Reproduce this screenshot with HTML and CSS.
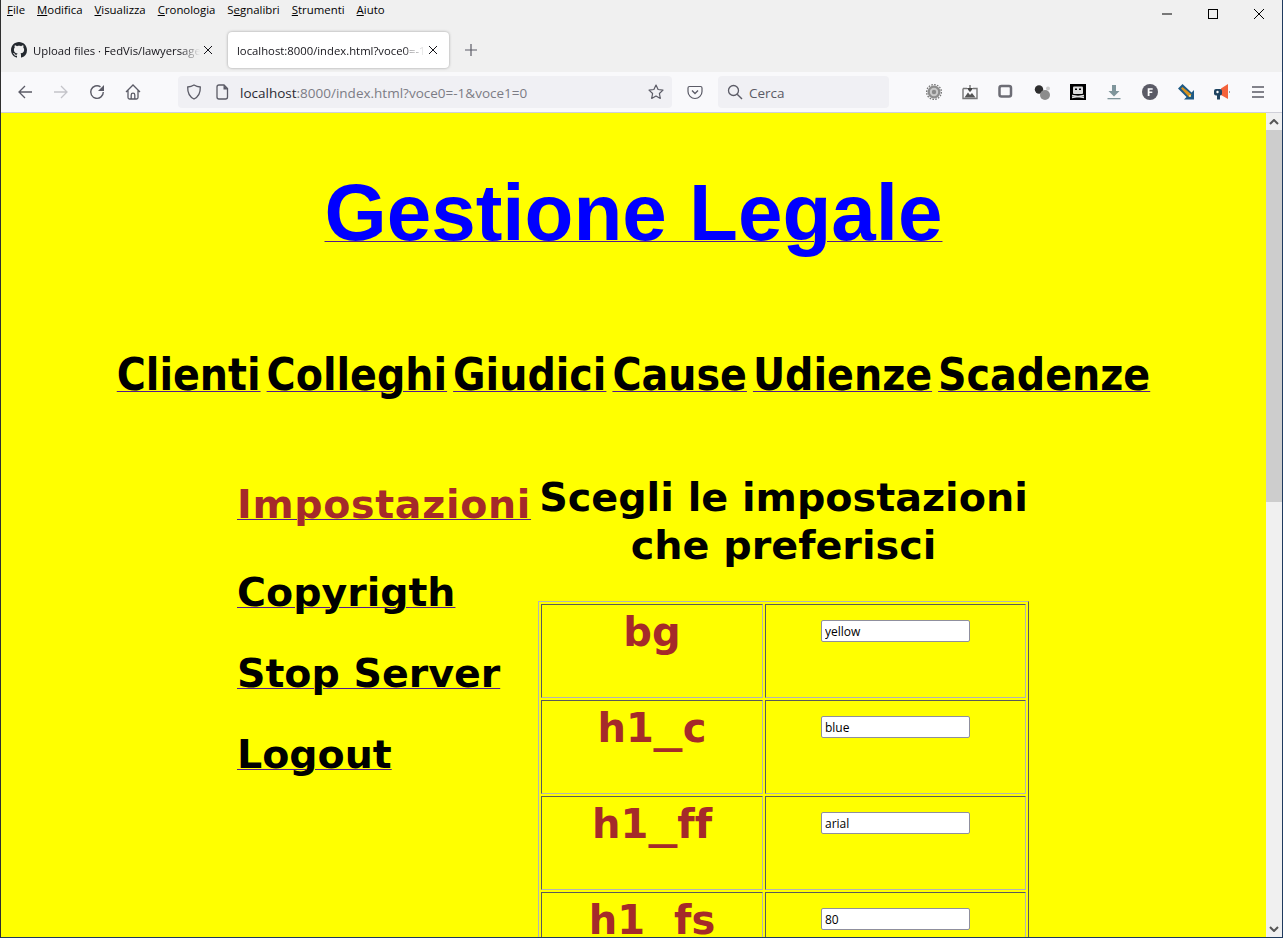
FILE: index.html
```html
<!DOCTYPE html>
<html lang="it">
<head>
    <meta charset="UTF-8">
    <title>Gestione Legale</title>
    <link rel="stylesheet" href="styles.css">
</head>
<body>
    <div class="window">
        <div class="topbar">
            <div class="menus">
                <span><u>F</u>ile</span>
                <span><u>M</u>odifica</span>
                <span><u>V</u>isualizza</span>
                <span><u>C</u>ronologia</span>
                <span>S<u>e</u>gnalibri</span>
                <span><u>S</u>trumenti</span>
                <span><u>A</u>iuto</span>
            </div>
            <div class="winctl">
                <svg width="46" height="28" viewBox="0 0 46 28"><path d="M18 14h10" stroke="#000" fill="none"/></svg>
                <svg width="46" height="28" viewBox="0 0 46 28"><rect x="18.500" y="9.500" width="9" height="9" stroke="#000" fill="none"/></svg>
                <svg width="46" height="28" viewBox="0 0 46 28"><path d="M18 9l10 10M28 9L18 19" stroke="#000" fill="none"/></svg>
            </div>
        </div>
        <div class="tabs">
            <div class="tab">
                <svg class="favicon" width="16" height="16" viewBox="0 0 16 16"><path fill="#24292f" d="M8 0C3.58 0 0 3.58 0 8c0 3.54 2.29 6.53 5.47 7.59.4.07.55-.17.55-.38 0-.19-.01-.82-.01-1.49-2.01.37-2.53-.49-2.69-.94-.09-.23-.48-.94-.82-1.13-.28-.15-.68-.52-.01-.53.63-.01 1.08.58 1.23.82.72 1.21 1.87.87 2.33.66.07-.52.28-.87.51-1.07-1.78-.2-3.64-.89-3.64-3.95 0-.87.31-1.59.82-2.15-.08-.2-.36-1.02.08-2.12 0 0 .67-.21 2.2.82.64-.18 1.32-.27 2-.27s1.36.09 2 .27c1.53-1.04 2.2-.82 2.2-.82.44 1.1.16 1.92.08 2.12.51.56.82 1.27.82 2.15 0 3.07-1.87 3.75-3.65 3.95.29.25.54.73.54 1.48 0 1.07-.01 1.93-.01 2.2 0 .21.15.46.55.38A8.01 8.01 0 0 0 16 8c0-4.42-3.58-8-8-8z"/></svg>
                <span class="tab-title">Upload files · FedVis/lawyersagent</span>
                <svg class="tab-close" width="10" height="10" viewBox="0 0 10 10"><path d="M1 1l8 8M9 1L1 9" stroke="#15141a" fill="none"/></svg>
            </div>
            <div class="tab active">
                <span class="tab-title">localhost:8000/index.html?voce0=-1&amp;voce1=0</span>
                <svg class="tab-close" width="10" height="10" viewBox="0 0 10 10"><path d="M1 1l8 8M9 1L1 9" stroke="#15141a" fill="none"/></svg>
            </div>
            <svg class="newtab" width="12" height="12" viewBox="0 0 12 12"><path d="M6 0v12M0 6h12" stroke="#5b5b66" fill="none" stroke-width="1.200"/></svg>
        </div>
        <div class="toolbar">
            <div class="btn"><svg width="16" height="16" viewBox="0 0 16 16"><path d="M15 8H2M8 2L2 8l6 6" stroke="#5b5b66" stroke-width="1.300" fill="none"/></svg></div>
            <div class="btn"><svg width="16" height="16" viewBox="0 0 16 16"><path d="M1 8h13M8 2l6 6-6 6" stroke="#c4c4c9" stroke-width="1.300" fill="none"/></svg></div>
            <div class="btn"><svg width="16" height="16" viewBox="0 0 16 16"><path d="M14.300 8A6.300 6.300 0 1 1 11.500 2.800" stroke="#5b5b66" stroke-width="1.400" fill="none"/><path d="M15 1v6H9z" fill="#5b5b66"/></svg></div>
            <div class="btn"><svg width="16" height="16" viewBox="0 0 16 16"><path d="M1 8l7-7 7 7M3 6.500v7a1.500 1.500 0 0 0 1.500 1.500h7a1.500 1.500 0 0 0 1.500-1.500v-7M6.200 15v-4a1.800 1.800 0 0 1 3.600 0v4" stroke="#5b5b66" stroke-width="1.300" fill="none"/></svg></div>
            <div class="urlbar">
                <svg class="shield" width="16" height="16" viewBox="0 0 16 16"><path d="M8 1c2 1.200 4 1.800 6.300 2 .2 5.500-1.800 9.800-6.300 12C3.500 12.800 1.500 8.500 1.700 3 4 2.800 6 2.200 8 1z" stroke="#5b5b66" stroke-width="1.300" fill="none"/></svg>
                <svg class="pageicon" width="16" height="16" viewBox="0 0 16 16"><path d="M3 3a2 2 0 0 1 2-2h5l3.500 3.500V13a2 2 0 0 1-2 2H5a2 2 0 0 1-2-2z" stroke="#5b5b66" stroke-width="1.300" fill="none"/><path d="M9.500 1v4.500H14" fill="#5b5b66"/></svg>
                <div class="urltext">localhost<span class="dim">:8000/index.html?voce0=-1&amp;voce1=0</span></div>
                <svg width="16" height="16" viewBox="0 0 16 16"><path d="M8 1l2.100 4.500 4.900.6-3.600 3.400.9 4.900L8 12l-4.300 2.400.9-4.900L1 6.100l4.900-.6z" stroke="#5b5b66" stroke-width="1.200" fill="none" stroke-linejoin="round"/></svg>
            </div>
            <div class="btn pocket"><svg width="16" height="16" viewBox="0 0 16 16"><path d="M2.500 2.500h11A1.500 1.500 0 0 1 15 4v3.500a7 7 0 0 1-14 0V4a1.500 1.500 0 0 1 1.500-1.500z" stroke="#5b5b66" stroke-width="1.200" fill="none"/><path d="M5 6.500l3 3 3-3" stroke="#5b5b66" stroke-width="1.300" fill="none"/></svg></div>
            <div class="searchbar">
                <svg width="16" height="16" viewBox="0 0 16 16"><circle cx="6.500" cy="6.500" r="5" stroke="#5b5b66" stroke-width="1.300" fill="none"/><path d="M10.200 10.200L15 15" stroke="#5b5b66" stroke-width="1.400"/></svg>
                <span>Cerca</span>
            </div>
            <div class="extensions">
                <div class="btn"><svg width="16" height="16" viewBox="0 0 16 16"><circle cx="8" cy="8" r="6.500" fill="#8d8d8d"/><circle cx="8" cy="8" r="7.400" fill="none" stroke="#777" stroke-width="1.300" stroke-dasharray="1.600 1.300"/><circle cx="8" cy="8" r="4.200" fill="#c9c9c9"/><circle cx="8" cy="8" r="2.200" fill="#8a8a8a"/></svg></div>
                <div class="btn"><svg width="16" height="16" viewBox="0 0 16 16"><path d="M1 4.500h4M11 4.500h4v10H1v-10" stroke="#777" stroke-width="1.400" fill="none"/><path d="M2.500 13.500l3.500-5 2 2.500 2-2 3.500 4.500z" fill="#555"/><path d="M8 1v5.500M5.500 4.500L8 7.500l2.500-3z" stroke="#444" fill="#444"/></svg></div>
                <div class="btn"><svg width="16" height="16" viewBox="0 0 16 16"><rect x="1.500" y="2" width="11.500" height="10.500" rx="2" stroke="#6d6d75" stroke-width="2.500" fill="none"/></svg></div>
                <div class="btn"><svg width="16" height="16" viewBox="0 0 16 16"><circle cx="14" cy="4.500" r="2" fill="#ccc"/><circle cx="5" cy="5.500" r="4.200" fill="#2e2e2e"/><circle cx="11" cy="11" r="5" fill="#8c8c8c"/></svg></div>
                <div class="btn"><svg width="16" height="16" viewBox="0 0 16 16"><rect width="16" height="16" fill="#000"/><path d="M4 2.500h8a1 1 0 0 1 1 1V9a1 1 0 0 1-1 1H4a1 1 0 0 1-1-1V3.500a1 1 0 0 1 1-1z" fill="#ddd"/><rect x="5" y="4.500" width="2" height="1.500" fill="#000"/><rect x="9" y="4.500" width="2" height="1.500" fill="#000"/><path d="M2 11.500l12 2M14 11.500L2 13.500" stroke="#ddd" stroke-width="1.300"/></svg></div>
                <div class="btn"><svg width="16" height="16" viewBox="0 0 16 16"><path d="M6 1h4v6h3.500L8 12.500 2.500 7H6z" fill="#7f959b"/><rect x="1.500" y="14" width="13" height="1.300" fill="#7f959b"/></svg></div>
                <div class="btn"><svg width="16" height="16" viewBox="0 0 16 16"><circle cx="8" cy="8" r="8" fill="#5b5b66"/><path d="M5.700 12V4.200h5v1.500H7.500v1.800h2.800V9H7.500v3z" fill="#fff"/></svg></div>
                <div class="btn"><svg width="16" height="16" viewBox="0 0 16 16"><path d="M4.500 0L0 4.500 8.500 13 6 15.500h10V6l-2.500 2.500z" fill="#1f5a85"/><path d="M4.500 3L3 4.500l8 8.500 2.500-2.500z" fill="#d9941f"/><circle cx="12" cy="12" r="1" fill="#fff0a0"/></svg></div>
                <div class="btn"><svg width="16" height="16" viewBox="0 0 16 16"><path d="M7 4.500L14 0v15L7 11z" fill="#f4623a"/><rect x="0" y="5" width="8" height="6.500" rx="2" fill="#1f4461"/><rect x="3" y="10" width="3" height="5.500" fill="#1f4461"/><circle cx="3.500" cy="8" r="1.200" fill="#fff"/><rect x="15" y="7.500" width="1" height="1" fill="#444"/></svg></div>
                <div class="btn"><svg width="16" height="16" viewBox="0 0 16 16"><path d="M2 3h12M2 8h12M2 13h12" stroke="#5b5b66" stroke-width="1.300"/></svg></div>
            </div>
        </div>
        <div class="viewport">
            <div class="page">
                <h1 class="title"><a href="#">Gestione Legale</a></h1>
                <nav class="mainnav">
                    <a href="#"><span>Clienti</span></a>
                    <a href="#"><span>Colleghi</span></a>
                    <a href="#"><span>Giudici</span></a>
                    <a href="#"><span>Cause</span></a>
                    <a href="#"><span>Udienze</span></a>
                    <a href="#"><span>Scadenze</span></a>
                </nav>
                <div class="content">
                    <div class="sidemenu">
                        <a href="#" class="current"><span>Impostazioni</span></a>
                        <a href="#"><span>Copyrigth</span></a>
                        <a href="#"><span>Stop Server</span></a>
                        <a href="#"><span>Logout</span></a>
                    </div>
                    <div class="settings">
                        <h2>Scegli le impostazioni<br>che preferisci</h2>
                        <table class="settings-table">
                            <tr><th>bg</th><td><input type="text" value="yellow"></td></tr>
                            <tr><th>h1<span class="us">_</span>c</th><td><input type="text" value="blue"></td></tr>
                            <tr><th>h1<span class="us">_</span>ff</th><td><input type="text" value="arial"></td></tr>
                            <tr><th>h1<span class="us">_</span>fs</th><td><input type="text" value="80"></td></tr>
                        </table>
                    </div>
                </div>
            </div>
            <div class="scrollbar">
                <div class="arrow"><svg width="10" height="6" viewBox="0 0 10 6"><path d="M1 5l4-4 4 4" stroke="#555" stroke-width="2" fill="none"/></svg></div>
                <div class="thumb"></div>
                <div class="track"></div>
                <div class="arrow"><svg width="10" height="6" viewBox="0 0 10 6"><path d="M1 1l4 4 4-4" stroke="#555" stroke-width="2" fill="none"/></svg></div>
            </div>
        </div>
    </div>
</body>
</html>
```

FILE: styles.css
```css
html, body {
    margin: 0;
    height: 100%;
    overflow: hidden;
}
body {
    font-family: "Open Sans", sans-serif;
    color: #15141a;
}
.window {
    height: 938px;
    box-sizing: border-box;
    border-left: 1px solid #2f2f2f;
    border-right: 1px solid #1f3a5f;
    border-bottom: 1px solid #1f3a5f;
    display: flex;
    flex-direction: column;
    background: #f0f0f0;
}
.topbar {
    height: 24px;
    flex: none;
    display: flex;
    justify-content: space-between;
}
.menus {
    display: flex;
    gap: 12px;
    padding: 2px 0 0 6px;
    font-size: 11.4px;
    line-height: 16px;
    color: #000;
}
.winctl {
    display: flex;
    height: 28px;
}
.tabs {
    height: 40px;
    flex: none;
    display: flex;
    align-items: flex-start;
    padding-top: 8px;
    font-size: 11.3px;
}
.tab {
    width: 220px;
    height: 36px;
    box-sizing: border-box;
    display: flex;
    align-items: center;
    padding: 0 8px 0 10px;
    margin-right: 7px;
    border-radius: 4px;
}
.tab.active {
    width: 221px;
    background: #fff;
    box-shadow: 0 0 3px rgba(0, 0, 0, 0.35);
    padding: 0 11px 0 9px;
    margin-right: 0;
}
.favicon {
    flex: none;
    margin-right: 6px;
}
.tab-title {
    flex: 1;
    overflow: hidden;
    white-space: nowrap;
    -webkit-mask-image: linear-gradient(to right, #000 88%, transparent);
    mask-image: linear-gradient(to right, #000 88%, transparent);
}
.tab-close {
    flex: none;
    margin-left: 3px;
}
.newtab {
    margin: 12px 0 0 16px;
}
.toolbar {
    height: 40px;
    flex: none;
    display: flex;
    align-items: center;
    background: #f9f9fb;
    border-bottom: 1px solid #cfcfd8;
    padding: 0 6px;
}
.btn {
    width: 36px;
    height: 32px;
    flex: none;
    display: flex;
    align-items: center;
    justify-content: center;
}
.urlbar {
    width: 494px;
    height: 32px;
    margin-left: 27px;
    box-sizing: border-box;
    display: flex;
    align-items: center;
    padding: 0 8px;
    background: #f0f0f4;
    border-radius: 4px;
    flex: none;
}
.shield {
    margin-right: 12px;
}
.pageicon {
    margin-right: 10px;
}
.urltext {
    flex: 1;
    padding-top: 1px;
    font-size: 13.5px;
    white-space: nowrap;
    color: #2b2a33;
}
.dim {
    color: #7c7c85;
}
.pocket {
    margin: 0 5px;
}
.searchbar {
    width: 171px;
    height: 32px;
    box-sizing: border-box;
    display: flex;
    align-items: center;
    gap: 6px;
    padding-left: 9px;
    background: #f0f0f4;
    border-radius: 4px;
    font-size: 13.5px;
    color: #5b5b66;
    flex: none;
}
.searchbar span {
    padding-top: 1px;
}
.extensions {
    display: flex;
    margin-left: 27px;
}
.viewport {
    flex: 1;
    min-height: 0;
    display: flex;
    background: #ff0;
}
.page {
    flex: 1;
    min-width: 0;
    overflow: hidden;
}
.scrollbar {
    width: 16px;
    flex: none;
    display: flex;
    flex-direction: column;
    background: #f0f0f0;
}
.arrow {
    height: 17px;
    flex: none;
    display: flex;
    align-items: center;
    justify-content: center;
}
.thumb {
    height: 372px;
    flex: none;
    background: #cdcdcd;
}
.track {
    flex: 1;
}
.title {
    margin: 0;
    box-sizing: border-box;
    height: 200px;
    padding-top: 54px;
    text-align: center;
    font: bold 80px/92px "Liberation Sans", Arial, sans-serif;
}
.title a {
    color: #00f;
    text-decoration-color: #551a8b;
    text-decoration-thickness: 1px;
}
.mainnav {
    display: flex;
    justify-content: center;
    gap: 6px;
    padding-top: 35px;
    font: bold 44.05px/54px "DejaVu Sans Condensed", "DejaVu Sans", sans-serif;
}
.mainnav a, .sidemenu a {
    text-decoration: underline;
    text-decoration-color: #551a8b;
    text-decoration-thickness: 1px;
}
.mainnav span, .sidemenu span {
    color: #000;
}
.content {
    display: flex;
    padding: 71px 0 0 236px;
    font-family: "DejaVu Sans", Verdana, sans-serif;
    font-variant-ligatures: none;
}
.sidemenu {
    width: 301px;
    flex: none;
    display: flex;
    flex-direction: column;
    align-items: flex-start;
    font-weight: bold;
    font-size: 39.5px;
    line-height: 48px;
    padding-top: 7px;
}
.sidemenu a {
    margin-bottom: 33px;
}
.sidemenu a.current {
    margin-bottom: 40px;
    letter-spacing: 0.7px;
}
.sidemenu a.current span {
    color: #a52a2a;
}
.settings {
    width: 491px;
    flex: none;
}
.settings h2 {
    margin: 0 0 32px;
    text-align: center;
    white-space: nowrap;
    font-size: 39.7px;
    line-height: 48px;
    color: #000;
}
.settings-table {
    width: 491px;
    border-collapse: separate;
    border-spacing: 2px;
    border: 1px solid;
    border-color: #b4b4b4 #5a5a5a #5a5a5a #b4b4b4;
    table-layout: fixed;
}
.settings-table th, .settings-table td {
    height: 92px;
    padding: 0;
    border: 1px solid;
    border-color: #5a5a5a #b4b4b4 #b4b4b4 #5a5a5a;
    vertical-align: top;
    text-align: center;
}
.settings-table th {
    width: 220px;
    font-size: 40px;
    line-height: 54px;
    color: #a52a2a;
}
.us {
    display: inline-block;
    margin: 0 4.500px;
    transform: scaleX(1.45);
}
.settings-table input {
    width: 149px;
    height: 22px;
    box-sizing: border-box;
    margin-top: 15px;
    padding: 0 3px;
    border: 1px solid #8f8f9d;
    border-radius: 2px;
    background: #fff;
    color: #000;
    font: 12px "Open Sans", sans-serif;
}
```
